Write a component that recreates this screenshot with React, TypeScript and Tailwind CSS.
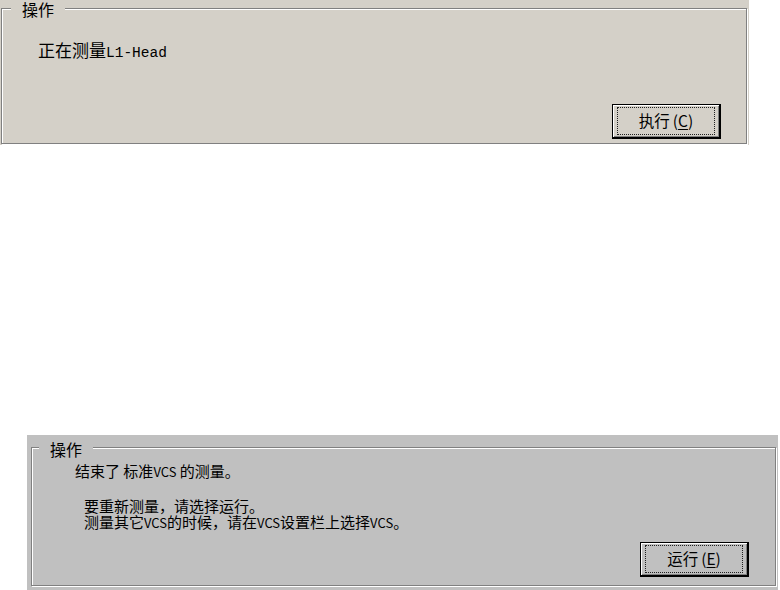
import React from "react";

const cjk = { fontFamily: '"Noto Sans CJK SC", "Noto Sans", sans-serif' };
const mono = { fontFamily: '"Liberation Mono", "Noto Sans CJK SC", monospace' };

type BtnProps = { label: string; hot: string; className?: string };

const WinButton = ({ label, hot, className }: BtnProps) => {
  return (
    <div
      className={`flex h-[35px] w-[109px] border border-black border-r-2 border-b-2 px-[5px] py-[3px] shadow-[inset_1px_1px_0_#fff,inset_-1px_-1px_0_#808080] ${className ?? ""}`}
    >
      <div className="flex flex-1 items-center justify-center outline-1 outline-dotted outline-[#202020] text-[15.5px] leading-none text-black" style={cjk}>
        <span>{label}</span>
        <span className="ml-[3px]">(</span>
        <span className="underline underline-offset-2">{hot}</span>
        <span>)</span>
      </div>
    </div>
  );
};

const GroupBox = ({
  title,
  titleClass,
  className,
  children,
}: {
  title: string;
  titleClass: string;
  className: string;
  children: React.ReactNode;
}) => {
  return (
    <div className={`relative border border-[#808080] shadow-[inset_1px_1px_0_#fff,1px_1px_0_#fff] ${className}`}>
      <span className={`absolute px-[11px] text-[16px] leading-none text-black ${titleClass}`} style={cjk}>
        {title}
      </span>
      {children}
    </div>
  );
};

const Vcs = () => <span className="text-[13px]">VCS</span>;

export default function App() {
  return (
    <div className="h-[590px] w-[780px] overflow-hidden bg-white">
      {/* top dialog */}
      <div className="h-[145px] w-[749px] bg-[#d4d0c8] pl-px pt-[8px]">
        <GroupBox title="操作" titleClass="-top-[8px] left-[9px] bg-[#d4d0c8]" className="h-[136px] w-[746px]">
          <div className="flex flex-col pl-[36px] pr-[25px] pt-[32px]">
            <div className="flex items-baseline text-[17px] leading-none text-black">
              <span style={cjk}>正在测量</span>
              <span className="text-[14.5px]" style={mono}>L1-Head</span>
            </div>
            <WinButton label="执行" hot="C" className="mt-[43px] self-end" />
          </div>
        </GroupBox>
      </div>

      {/* bottom dialog */}
      <div className="ml-[27px] mt-[290px] h-[155px] w-[751px] bg-[#c0c0c0] pl-[4px] pt-[12px]">
        <GroupBox title="操作" titleClass="-top-[7px] left-[7px] bg-[#c0c0c0]" className="h-[139px] w-[745px]">
          <div className="flex flex-col pl-[43px] pr-[26px] pt-[15px] text-[15px] leading-[16px] text-black" style={cjk}>
            <div>
              结束了 标准<Vcs /> 的测量。
            </div>
            <div className="mt-[18px] pl-[9px]">要重新测量，请选择运行。</div>
            <div className="pl-[9px]">
              测量其它<Vcs />的时候，请在<Vcs />设置栏上选择<Vcs />。
            </div>
            <WinButton label="运行" hot="E" className="mt-[11px] self-end" />
          </div>
        </GroupBox>
      </div>
    </div>
  );
}
